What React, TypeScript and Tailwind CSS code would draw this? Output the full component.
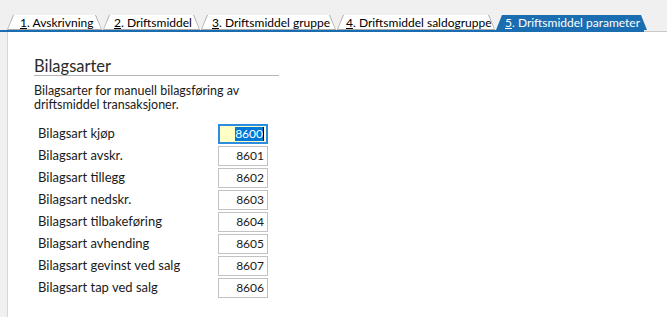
import * as React from "react";

interface TabDef {
  num: string;
  label: string;
  width: string;
  pad: string;
  active?: boolean;
}

const tabs: TabDef[] = [
  { num: "1", label: "Avskrivning", width: "w-[95px]", pad: "pl-[13px]" },
  { num: "2", label: "Driftsmiddel", width: "w-[97px]", pad: "pl-[11px]" },
  { num: "3", label: "Driftsmiddel gruppe", width: "w-[135px]", pad: "pl-[11px]" },
  { num: "4", label: "Driftsmiddel saldogruppe", width: "w-[158px]", pad: "pl-[9px]" },
  { num: "5", label: "Driftsmiddel parameter", width: "w-[151px]", pad: "pl-[9px]", active: true },
];

const rows = [
  { label: "Bilagsart kjøp", value: "8600", focused: true },
  { label: "Bilagsart avskr.", value: "8601" },
  { label: "Bilagsart tillegg", value: "8602" },
  { label: "Bilagsart nedskr.", value: "8603" },
  { label: "Bilagsart tilbakeføring", value: "8604" },
  { label: "Bilagsart avhending", value: "8605" },
  { label: "Bilagsart gevinst ved salg", value: "8607" },
  { label: "Bilagsart tap ved salg", value: "8606" },
];

const Tab = ({ tab }: { tab: TabDef }) => {
  if (tab.active) {
    return (
      <div
        className={`${tab.width} h-[15px] bg-[#1a6db0] text-white [clip-path:polygon(6px_0,calc(100%-6px)_0,100%_100%,0_100%)]`}
      >
        <div className={`${tab.pad} text-[12px] leading-[16px] whitespace-nowrap`}>
          <span className="underline">{tab.num}</span>. {tab.label}
        </div>
      </div>
    );
  }
  return (
    <div
      className={`${tab.width} h-[15px] bg-[#a9a9a9] pt-px px-px [clip-path:polygon(6px_0,calc(100%-6px)_0,100%_100%,0_100%)]`}
    >
      <div className="h-[14px] bg-white [clip-path:polygon(6px_0,calc(100%-6px)_0,100%_100%,0_100%)]">
        <div className={`${tab.pad} -ml-px -mt-px text-[12px] leading-[16px] text-black whitespace-nowrap`}>
          <span className="underline">{tab.num}</span>. {tab.label}
        </div>
      </div>
    </div>
  );
};

const App = () => {
  return (
    <div className="w-[667px] h-[317px] bg-[#f0f0f0] flex flex-col overflow-hidden font-['Lato',sans-serif] text-[#1a1a1a]">
      <div className="h-[15px] shrink-0" />
      <div className="flex h-[15px] shrink-0 pl-[7px] gap-px">
        {tabs.map((t) => (
          <Tab key={t.num} tab={t} />
        ))}
      </div>
      <div className="flex h-[2px] shrink-0">
        <div className="w-[644px] bg-[#1a6db0]" />
        <div className="flex-1 flex flex-col">
          <div className="h-px bg-[#f0f0f0]" />
          <div className="h-px bg-[#c8c8c8]" />
        </div>
      </div>
      <div className="flex-1 flex">
        <div className="w-[7px] shrink-0" />
        <div className="flex-1 bg-white border-l border-[#d6d6d6] pl-[26px] pt-[26px]">
          <div className="w-[245px]">
            <h2 className="text-[16.5px] leading-[17px] text-[#2b2b2b] border-b border-[#b4b4b4]">
              Bilagsarter
            </h2>
            <p className="mt-[8px] text-[12.5px] leading-[14px] text-[#1a1a1a]">
              Bilagsarter for manuell bilagsføring av
              <br />
              driftsmiddel transaksjoner.
            </p>
          </div>
          <div className="mt-[12px] flex flex-col gap-[2px] w-[234px]">
            {rows.map((r) => (
              <div key={r.label} className="flex items-center h-[20px] pl-[4px]">
                <div className="flex-1 text-[13px] text-[#1a1a1a] whitespace-nowrap">{r.label}</div>
                {r.focused ? (
                  <div className="w-[50px] h-[20px] border-2 border-[#2c8ce0] bg-[#ffffc4] flex items-center justify-end pr-[2px]">
                    <span className="bg-[#0078d7] text-white text-[12px] leading-[14px]">{r.value}</span>
                    <span className="w-px h-[14px] bg-black" />
                  </div>
                ) : (
                  <div className="w-[50px] h-[20px] border border-[#c2c2c2] bg-white flex items-center justify-end pr-[3px] text-[12px] text-[#1a1a1a]">
                    {r.value}
                  </div>
                )}
              </div>
            ))}
          </div>
        </div>
      </div>
    </div>
  );
};

export default App;
